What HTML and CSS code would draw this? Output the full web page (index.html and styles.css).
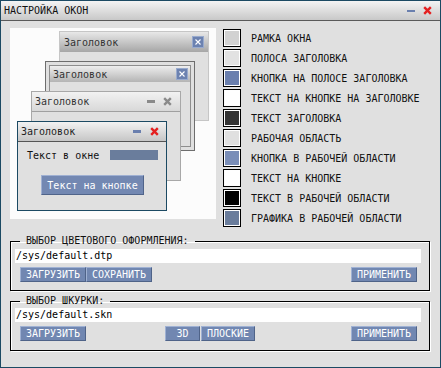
FILE: index.html
```html
<!DOCTYPE html>
<html lang="ru">
<head>
    <meta charset="UTF-8">
    <title>Настройка окон</title>
    <link rel="stylesheet" href="styles.css">
</head>
<body>
    <div class="window">
        <div class="titlebar">
            <span>НАСТРОЙКА ОКОН</span>
            <div class="tb-btns">
                <span class="min blue"></span>
                <svg class="x" width="9" height="9" viewBox="0 0 9 9"><path d="M1.2 1.2L7.8 7.8M7.8 1.2L1.2 7.8" stroke="#e42020" stroke-width="2.4"/></svg>
            </div>
        </div>
        <div class="body">
            <div class="top">
                <div class="preview">
                    <!-- окна-примеры, самое нижнее первым -->
                    <div class="mini w1">
                        <div class="mini-title">
                            <span>Заголовок</span>
                            <span class="cbtn"><svg width="6" height="6" viewBox="0 0 6 6"><path d="M0.5 0.5L5.5 5.5M5.5 0.5L0.5 5.5" stroke="#fff" stroke-width="1.1"/></svg></span>
                        </div>
                    </div>
                    <div class="mini w2">
                        <div class="w2-inner">
                            <div class="mini-title">
                                <span>Заголовок</span>
                                <span class="cbtn"><svg width="6" height="6" viewBox="0 0 6 6"><path d="M0.5 0.5L5.5 5.5M5.5 0.5L0.5 5.5" stroke="#fff" stroke-width="1.1"/></svg></span>
                            </div>
                        </div>
                    </div>
                    <div class="mini w3">
                        <div class="mini-title">
                            <span>Заголовок</span>
                            <div class="tb-btns">
                                <span class="min gray"></span>
                                <svg class="x" width="9" height="9" viewBox="0 0 9 9"><path d="M1.2 1.2L7.8 7.8M7.8 1.2L1.2 7.8" stroke="#8a8a8a" stroke-width="2.4"/></svg>
                            </div>
                        </div>
                    </div>
                    <div class="mini w4">
                        <div class="mini-title">
                            <span>Заголовок</span>
                            <div class="tb-btns">
                                <span class="min blue"></span>
                                <svg class="x" width="9" height="9" viewBox="0 0 9 9"><path d="M1.2 1.2L7.8 7.8M7.8 1.2L1.2 7.8" stroke="#e42020" stroke-width="2.4"/></svg>
                            </div>
                        </div>
                        <div class="mini-body">
                            <div class="mini-row">
                                <span>Текст в окне</span>
                                <span class="bar"></span>
                            </div>
                            <button class="mini-btn">Текст на кнопке</button>
                        </div>
                    </div>
                </div>
                <ul class="colors">
                    <li><span class="swatch sw-frame"></span><span class="label">РАМКА ОКНА</span></li>
                    <li><span class="swatch sw-title"></span><span class="label">ПОЛОСА ЗАГОЛОВКА</span></li>
                    <li><span class="swatch sw-tbtn"></span><span class="label">КНОПКА НА ПОЛОСЕ ЗАГОЛОВКА</span></li>
                    <li><span class="swatch sw-white"></span><span class="label">ТЕКСТ НА КНОПКЕ НА ЗАГОЛОВКЕ</span></li>
                    <li><span class="swatch sw-ttext"></span><span class="label">ТЕКСТ ЗАГОЛОВКА</span></li>
                    <li><span class="swatch sw-work"></span><span class="label">РАБОЧАЯ ОБЛАСТЬ</span></li>
                    <li><span class="swatch sw-wbtn"></span><span class="label">КНОПКА В РАБОЧЕЙ ОБЛАСТИ</span></li>
                    <li><span class="swatch sw-white"></span><span class="label">ТЕКСТ НА КНОПКЕ</span></li>
                    <li><span class="swatch sw-black"></span><span class="label">ТЕКСТ В РАБОЧЕЙ ОБЛАСТИ</span></li>
                    <li><span class="swatch sw-graph"></span><span class="label">ГРАФИКА В РАБОЧЕЙ ОБЛАСТИ</span></li>
                </ul>
            </div>

            <fieldset class="group">
                <legend>ВЫБОР ЦВЕТОВОГО ОФОРМЛЕНИЯ:</legend>
                <input class="path" type="text" value="/sys/default.dtp">
                <div class="btn-row">
                    <button class="btn">ЗАГРУЗИТЬ</button>
                    <button class="btn">СОХРАНИТЬ</button>
                    <button class="btn push">ПРИМЕНИТЬ</button>
                </div>
            </fieldset>

            <fieldset class="group second">
                <legend>ВЫБОР ШКУРКИ:</legend>
                <input class="path" type="text" value="/sys/default.skn">
                <div class="btn-row">
                    <button class="btn">ЗАГРУЗИТЬ</button>
                    <button class="btn btn-3d">3D</button>
                    <button class="btn btn-flat">ПЛОСКИЕ</button>
                    <button class="btn push">ПРИМЕНИТЬ</button>
                </div>
            </fieldset>
        </div>
    </div>
</body>
</html>
```

FILE: styles.css
```css
* {
    box-sizing: border-box;
}
body {
    margin: 0;
    background: #e0e0e0;
    font-family: "DejaVu Sans Mono", "Liberation Mono", monospace;
    font-size: 10px;
    color: #111;
}
.window {
    width: 441px;
    height: 368px;
    border: 1px solid #1c4a63;
    background: #e0e0e0;
}
.titlebar {
    height: 20px;
    display: flex;
    align-items: center;
    padding: 0 8px 0 3px;
    border-bottom: 1px solid #5a5a5a;
    background: linear-gradient(#f4f4f4, #c8c8c8);
}
.tb-btns {
    margin-left: auto;
    display: flex;
    align-items: center;
    gap: 8px;
}
.x {
    display: block;
}
.min {
    display: block;
    width: 8px;
    height: 2px;
}
.min.blue {
    background: #6a7fae;
}
.min.gray {
    height: 3px;
    background: #8a8a8a;
}
.body {
    padding: 7px 0 0 9px;
}
.top {
    display: flex;
    height: 200px;
}

/* превью */
.preview {
    position: relative;
    width: 206px;
    height: 191px;
    background: #fcfcfc;
}
.mini {
    position: absolute;
    width: 150px;
    height: 90px;
    background: #e0e0e0;
}
.mini-title {
    height: 20px;
    display: flex;
    align-items: center;
    padding: 0 4px 0 4px;
    color: #333;
}
.cbtn {
    margin-left: auto;
    width: 12px;
    height: 12px;
    display: flex;
    align-items: center;
    justify-content: center;
    background: #6c82b0;
    border: 1px solid #98aacd;
}
.w1 {
    left: 49px;
    top: 3px;
    border: 1px solid #c6c6c6;
}
.w1 .mini-title {
    background: linear-gradient(#e8e8e8, #a6a6a6);
}
.w2 {
    left: 35px;
    top: 33px;
    padding: 3px;
    border: 1px solid #6e6e6e;
}
.w2-inner {
    height: 100%;
    border: 1px solid #8e8e8e;
}
.w2 .mini-title {
    height: 16px;
    padding: 0 2px 0 3px;
    background: linear-gradient(#eeeeee, #b4b4b4);
}
.w3 {
    left: 21px;
    top: 63px;
    border: 1px solid #a8a8a8;
}
.w3 .mini-title {
    padding: 0 8px 0 3px;
    border-bottom: 1px solid #a0a0a0;
    background: linear-gradient(#f2f2f2, #d8d8d8);
}
.w4 {
    left: 7px;
    top: 93px;
    border: 1px solid #1c4a63;
}
.w4 .mini-title {
    padding: 0 7px 0 3px;
    color: #222;
    border-bottom: 1px solid #555;
    background: linear-gradient(#f2f2f2, #c6c6c6);
}
.w4 .tb-btns {
    gap: 9px;
}
.w4 .min {
    height: 3px;
}
.mini-body {
    padding: 8px 8px 0 9px;
}
.mini-row {
    display: flex;
    justify-content: space-between;
    align-items: center;
    height: 10px;
}
.bar {
    width: 48px;
    height: 10px;
    background: #6a7d9c;
}
.mini-btn {
    display: block;
    margin: 15px auto 0;
    width: 103px;
    height: 20px;
    padding: 0;
    font: inherit;
    color: #fff;
    background: #7388b2;
    border: 1px solid;
    border-color: #9fb0d2 #50648a #50648a #9fb0d2;
}

/* список цветов */
.colors {
    list-style: none;
    margin: 0 0 0 7px;
    padding: 0;
}
.colors li {
    height: 20px;
    display: flex;
    align-items: center;
}
.swatch {
    width: 18px;
    height: 18px;
    border: 1px solid #000;
    box-shadow: inset 0 0 0 1px #fff;
}
.label {
    margin-left: 10px;
}
.sw-frame { background: #d2d2d2; }
.sw-title { background: #e2e2e2; }
.sw-tbtn { background: #6a7fae; }
.sw-white { background: #fff; }
.sw-ttext { background: #333; }
.sw-work { background: #e0e0e0; }
.sw-wbtn { background: #7a8eb8; }
.sw-black { background: #000; }
.sw-graph { background: #6a7d9c; }

/* группы внизу */
.group {
    width: 420px;
    min-width: 0;
    margin: 8px 0 0 0;
    padding: 3px 8px 8px 4px;
    border: 1px solid #000;
    box-shadow: 1px 1px 0 #fff, inset 1px 1px 0 #fff;
}
.group.second {
    margin-top: 5px;
    padding-top: 2px;
    padding-bottom: 9px;
}
.group legend {
    margin-left: 5px;
    padding: 0 6px;
    height: 10px;
    line-height: 10px;
}
.path {
    display: block;
    width: 100%;
    height: 14px;
    padding: 0 1px;
    border: none;
    outline: none;
    font: inherit;
    line-height: 14px;
    color: #000;
    background: #fff;
}
.btn-row {
    display: flex;
    margin-top: 4px;
    padding: 0 4px 0 5px;
}
.btn {
    width: 66px;
    height: 15px;
    padding: 0;
    font: inherit;
    line-height: 13px;
    color: #fff;
    background: #7187b1;
    border: 1px solid;
    border-color: #9fb1d3 #4f6388 #4f6388 #9fb1d3;
}
.btn-3d {
    width: 35px;
    margin-left: 79px;
}
.btn-flat {
    width: 54px;
    margin-left: 1px;
}
.push {
    margin-left: auto;
}
```
